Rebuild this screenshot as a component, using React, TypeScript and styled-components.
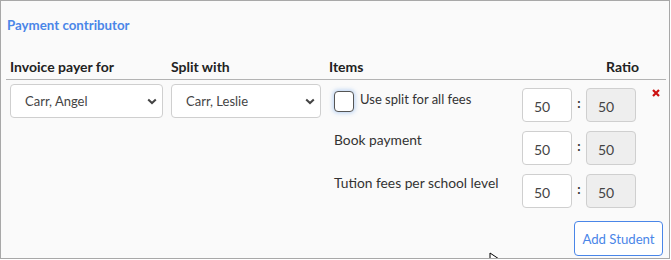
import styled, { createGlobalStyle } from 'styled-components'

const GlobalStyle = createGlobalStyle`
  html, body {
    margin: 0;
    padding: 0;
    background: #fff;
  }
  body {
    font-family: Lato, "Open Sans", Arial, sans-serif;
    color: #333;
  }
`

const Frame = styled.div`
  position: relative;
  box-sizing: border-box;
  width: 670px;
  height: 259px;
  border: 1px solid #a8a8a8;
  background: #fafafa;
  padding: 16px 3px 0 5px;
  overflow: hidden;
`

const Title = styled.div`
  font-size: 13.3px;
  line-height: 16px;
  font-weight: 700;
  color: #4a86e8;
  padding-left: 1px;
`

const Grid = styled.div`
  display: grid;
  grid-template-columns: 161px 158px 1fr;
`

const Header = styled(Grid)`
  margin-top: 25px;
  border-bottom: 1px solid #b3b3b3;
`

const HeadCell = styled.div<{ $split?: boolean }>`
  font-size: 14px;
  line-height: 17px;
  font-weight: 700;
  color: #222;
  padding: 0 4px 4px;
  display: flex;
  justify-content: ${(p) => (p.$split ? 'space-between' : 'flex-start')};
`

const RatioHead = styled.span`
  padding-right: 23px;
`

const Cell = styled.div`
  padding: 4px;
`

const ItemsCell = styled.div`
  padding: 8px 3px 0 9px;
  display: flex;
  flex-direction: column;
`

const SelectWrap = styled.div`
  position: relative;
`

const Select = styled.select`
  appearance: none;
  box-sizing: border-box;
  width: 100%;
  height: 34px;
  border: 1px solid #cfcfcf;
  border-radius: 4px;
  background: #fff;
  padding: 0 24px 0 14px;
  font-family: Lato, Arial, sans-serif;
  font-size: 13px;
  color: #444;
  outline: none;
`

const Chevron = styled.svg`
  position: absolute;
  right: 6px;
  top: 14px;
  pointer-events: none;
`

const ItemList = styled.div`
  display: flex;
  flex-direction: column;
  gap: 9px;
`

const ItemRow = styled.div`
  display: flex;
  align-items: flex-start;
  height: 34px;
`

const LabelArea = styled.div`
  width: 188px;
  display: flex;
  align-items: flex-start;
`

const ItemLabel = styled.span<{ $small?: boolean }>`
  margin-top: ${(p) => (p.$small ? 3 : 0)}px;
  font-size: ${(p) => (p.$small ? 13 : 13.8)}px;
  line-height: ${(p) => (p.$small ? 16 : 17)}px;
  color: #333;
`

const Checkbox = styled.span`
  box-sizing: border-box;
  width: 20px;
  height: 21px;
  margin: 3px 6px 0 0;
  border: 1px solid #555;
  border-radius: 4px;
  background: #fff;
  box-shadow: 0 0 4px 1px rgba(102, 160, 235, 0.45);
`

const NumberBox = styled.div<{ $readOnly?: boolean }>`
  box-sizing: border-box;
  width: 50px;
  height: 34px;
  border: 1px solid #cfcfcf;
  border-radius: 4px;
  background: ${(p) => (p.$readOnly ? '#eeeeee' : '#fff')};
  padding: 9px 0 0 11px;
  font-size: 14px;
  line-height: 17px;
  color: #444;
`

const Colon = styled.span`
  width: 14px;
  text-align: center;
  font-size: 13px;
  font-weight: 700;
  line-height: 16px;
  margin-top: 7px;
  color: #333;
`

const Remove = styled.svg`
  margin: 1px 0 0 16px;
`

const Actions = styled.div`
  display: flex;
  justify-content: flex-end;
  margin-top: 13px;
`

const AddButton = styled.button`
  box-sizing: border-box;
  width: 89px;
  height: 35px;
  border: 1px solid #4a86e8;
  border-radius: 4px;
  background: #fff;
  color: #4a86e8;
  font-family: Lato, Arial, sans-serif;
  font-size: 13.2px;
  padding: 0;
`

const Cursor = styled.svg`
  position: absolute;
  left: 488px;
  top: 251px;
`

const items = [
  { label: 'Use split for all fees', check: true },
  { label: 'Book payment', check: false },
  { label: 'Tution fees per school level', check: false },
]

function ChevronIcon() {
  return (
    <Chevron width="10" height="7" viewBox="0 0 10 7">
      <path d="M1.2 1.4 L5 5 L8.8 1.4" fill="none" stroke="#444" strokeWidth="2" />
    </Chevron>
  )
}

export default function App() {
  return (
    <>
      <GlobalStyle />
      <Frame>
        <Title>Payment contributor</Title>
        <Header>
          <HeadCell>Invoice payer for</HeadCell>
          <HeadCell>Split with</HeadCell>
          <HeadCell $split>
            <span>Items</span>
            <RatioHead>Ratio</RatioHead>
          </HeadCell>
        </Header>
        <Grid>
          <Cell>
            <SelectWrap>
              <Select defaultValue="angel">
                <option value="angel">Carr, Angel</option>
              </Select>
              <ChevronIcon />
            </SelectWrap>
          </Cell>
          <Cell>
            <SelectWrap>
              <Select defaultValue="leslie">
                <option value="leslie">Carr, Leslie</option>
              </Select>
              <ChevronIcon />
            </SelectWrap>
          </Cell>
          <ItemsCell>
            <ItemList>
              {items.map((item, i) => (
                <ItemRow key={item.label}>
                  <LabelArea>
                    {item.check && <Checkbox />}
                    <ItemLabel $small={item.check}>{item.label}</ItemLabel>
                  </LabelArea>
                  <NumberBox>50</NumberBox>
                  <Colon>:</Colon>
                  <NumberBox $readOnly>50</NumberBox>
                  {i === 0 && (
                    <Remove width="8" height="8" viewBox="0 0 8 8">
                      <path d="M1 1 L7 7 M7 1 L1 7" stroke="#cc1111" strokeWidth="2.2" />
                    </Remove>
                  )}
                </ItemRow>
              ))}
            </ItemList>
            <Actions>
              <AddButton>Add Student</AddButton>
            </Actions>
          </ItemsCell>
        </Grid>
        <Cursor width="12" height="12" viewBox="0 0 12 12">
          <path d="M1 1 L1 11 L4 8 L6 12 L8 11 L6 7 L10 7 Z" fill="#fff" stroke="#000" strokeWidth="1" />
        </Cursor>
      </Frame>
    </>
  )
}
